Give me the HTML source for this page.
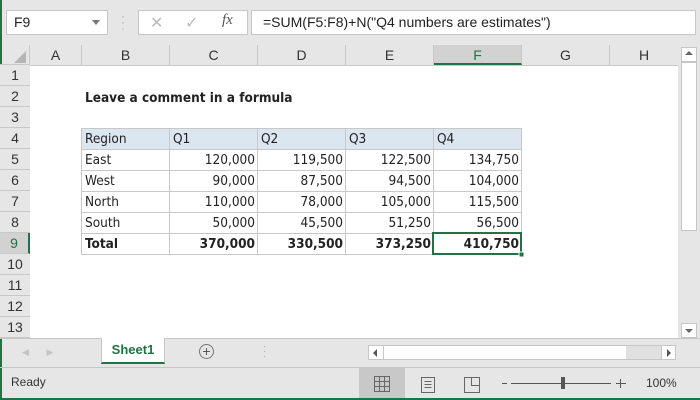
<!DOCTYPE html><html><head><style>
*{margin:0;padding:0;box-sizing:border-box}
body{width:700px;height:400px;overflow:hidden;background:#e6e6e6;font-family:"Liberation Sans",Calibri,sans-serif;position:relative;font-size:13px;color:#222}
.a{position:absolute}
.cell{position:absolute;line-height:20px;padding:0 3px;white-space:nowrap;font-family:"DejaVu Sans Condensed","Liberation Sans",sans-serif;font-size:13.5px}
.r{text-align:right}
.b{font-weight:bold}
.ch{position:absolute;top:45px;height:20px;border-right:1px solid #c8c8c8;text-align:center;line-height:20px;font-size:14px;color:#333}
.rh{position:absolute;left:0;width:30px;height:21px;border-bottom:1px solid #c8c8c8;text-align:center;line-height:21px;font-size:14px;color:#333;background:#e6e6e6}
</style></head><body>
<div class="a" style="left:0;top:0;width:2px;height:400px;background:#217346"></div>
<!-- formula bar -->
<div class="a" style="left:6px;top:10px;width:102px;height:25px;background:#fff;border:1px solid #c6c6c6;line-height:23px;padding-left:7px;font-size:14px">F9</div>
<div class="a" style="left:92px;top:20px;border:4px solid transparent;border-top:5px solid #777"></div>
<div class="a" style="left:121px;top:13px;color:#aaa;font-size:12px;line-height:6px">·<br>·<br>·</div>
<div class="a" style="left:138px;top:10px;width:110px;height:25px;background:#fff;border:1px solid #c6c6c6"></div>
<div class="a" style="left:150px;top:13px;color:#bbb;font-size:16px">✕</div>
<div class="a" style="left:185px;top:13px;color:#bbb;font-size:16px">✓</div>
<div class="a" style="left:222px;top:12px;color:#555;font-style:italic;font-family:'Liberation Serif',serif;font-size:15px">fx</div>
<div class="a" style="left:251px;top:10px;width:445px;height:25px;background:#fff;border:1px solid #c6c6c6;line-height:23px;padding-left:11px;font-size:14px">=SUM(F5:F8)+N("Q4 numbers are estimates")</div>
<!-- grid -->
<div class="a" style="left:30px;top:65px;width:648px;height:273px;background:#fff"></div>
<div class="a" style="left:0;top:45px;width:30px;height:20px;border-right:1px solid #c8c8c8;border-bottom:1px solid #c8c8c8"></div>
<div class="a" style="left:14px;top:51px;border-left:12px solid transparent;border-bottom:12px solid #b5b5b5;width:0;height:0"></div>
<div class="ch" style="left:30px;width:52px">A</div>
<div class="ch" style="left:82px;width:88px">B</div>
<div class="ch" style="left:170px;width:88px">C</div>
<div class="ch" style="left:258px;width:88px">D</div>
<div class="ch" style="left:346px;width:88px">E</div>
<div class="ch" style="left:434px;width:88px;background:#d2d2d2;color:#217346;border-bottom:2px solid #217346">F</div>
<div class="ch" style="left:522px;width:88px">G</div>
<div class="ch" style="left:610px;width:68px;border-right:none">H</div>
<div class="a" style="left:0;top:65px;width:678px;height:1px;background:#c8c8c8"></div>
<div class="a" style="left:29px;top:65px;width:1px;height:273px;background:#c8c8c8"></div>
<div class="rh" style="top:65px">1</div><div class="rh" style="top:86px">2</div><div class="rh" style="top:107px">3</div><div class="rh" style="top:128px">4</div><div class="rh" style="top:149px">5</div><div class="rh" style="top:170px">6</div><div class="rh" style="top:191px">7</div><div class="rh" style="top:212px">8</div><div class="rh" style="top:233px;background:#d2d2d2;color:#217346;border-right:2px solid #217346">9</div><div class="rh" style="top:254px">10</div><div class="rh" style="top:275px">11</div><div class="rh" style="top:296px">12</div><div class="rh" style="top:317px">13</div>
<div class="cell b" style="left:82px;top:88px">Leave a comment in a formula</div>
<!-- table -->
<div class="a" style="left:81px;top:128px;width:441px;height:21px;background:#dce6f1"></div>
<svg class="a" style="left:0;top:0" width="700" height="400">
<g stroke="#c8c8c8" stroke-width="1" fill="none">
<path d="M81.5 128.5H521.5M81.5 149.5H521.5M81.5 170.5H521.5M81.5 191.5H521.5M81.5 212.5H521.5M81.5 233.5H521.5M81.5 254.5H521.5"/>
<path d="M81.5 128V255M169.5 128V255M257.5 128V255M345.5 128V255M433.5 128V255M521.5 128V255"/>
</g>
<rect x="433" y="233" width="88" height="21" fill="none" stroke="#217346" stroke-width="2"/>
<rect x="519" y="252" width="5" height="5" fill="#217346" stroke="#fff" stroke-width="1"/>
</svg>
<div class="cell" style="left:82px;top:129px">Region</div><div class="cell" style="left:170px;top:129px">Q1</div><div class="cell" style="left:258px;top:129px">Q2</div><div class="cell" style="left:346px;top:129px">Q3</div><div class="cell" style="left:434px;top:129px">Q4</div>
<div class="cell" style="left:82px;top:150px">East</div><div class="cell r" style="left:170px;width:88px;top:150px">120,000</div><div class="cell r" style="left:258px;width:88px;top:150px">119,500</div><div class="cell r" style="left:346px;width:88px;top:150px">122,500</div><div class="cell r" style="left:434px;width:88px;top:150px">134,750</div>
<div class="cell" style="left:82px;top:171px">West</div><div class="cell r" style="left:170px;width:88px;top:171px">90,000</div><div class="cell r" style="left:258px;width:88px;top:171px">87,500</div><div class="cell r" style="left:346px;width:88px;top:171px">94,500</div><div class="cell r" style="left:434px;width:88px;top:171px">104,000</div>
<div class="cell" style="left:82px;top:192px">North</div><div class="cell r" style="left:170px;width:88px;top:192px">110,000</div><div class="cell r" style="left:258px;width:88px;top:192px">78,000</div><div class="cell r" style="left:346px;width:88px;top:192px">105,000</div><div class="cell r" style="left:434px;width:88px;top:192px">115,500</div>
<div class="cell" style="left:82px;top:213px">South</div><div class="cell r" style="left:170px;width:88px;top:213px">50,000</div><div class="cell r" style="left:258px;width:88px;top:213px">45,500</div><div class="cell r" style="left:346px;width:88px;top:213px">51,250</div><div class="cell r" style="left:434px;width:88px;top:213px">56,500</div>
<div class="cell b" style="left:82px;top:234px">Total</div><div class="cell r b" style="left:170px;width:88px;top:234px">370,000</div><div class="cell r b" style="left:258px;width:88px;top:234px">330,500</div><div class="cell r b" style="left:346px;width:88px;top:234px">373,250</div><div class="cell r b" style="left:434px;width:88px;top:234px">410,750</div>
<!-- vscroll -->
<div class="a" style="left:681px;top:47px;width:16px;height:291px;background:#e6e6e6"></div>
<div class="a" style="left:681px;top:47px;width:16px;height:15px;background:#fff;border:1px solid #c6c6c6"></div>
<div class="a" style="left:685px;top:51px;border:4px solid transparent;border-bottom:4px solid #666;border-top:none"></div>
<div class="a" style="left:681px;top:62px;width:16px;height:169px;background:#fff;border:1px solid #c6c6c6"></div>
<div class="a" style="left:681px;top:323px;width:16px;height:15px;background:#fff;border:1px solid #c6c6c6"></div>
<div class="a" style="left:685px;top:329px;border:4px solid transparent;border-top:4px solid #666;border-bottom:none"></div>
<!-- tabs -->
<div class="a" style="left:0;top:338px;width:700px;height:1px;background:#c6c6c6"></div>
<div class="a" style="left:22px;top:347px;color:#c4c4c4;font-size:9px">◀&nbsp;&nbsp;&nbsp;&nbsp;&nbsp;&nbsp;&nbsp;▶</div>
<div class="a" style="left:101px;top:338px;width:64px;height:26px;background:#fff;border:1px solid #c6c6c6;border-top:none;border-bottom:2px solid #217346;text-align:center;line-height:24px;color:#217346;font-weight:bold;font-size:13px">Sheet1</div>
<div class="a" style="left:199px;top:344px;width:15px;height:15px;border:1px solid #777;border-radius:50%;text-align:center;line-height:13px;color:#555;font-size:14px">+</div>
<div class="a" style="left:263px;top:344px;color:#aaa;font-size:10px;line-height:5px">·<br>·<br>·</div>
<div class="a" style="left:368px;top:345px;width:308px;height:15px;background:#fff;border:1px solid #c6c6c6"></div>
<div class="a" style="left:383px;top:345px;width:1px;height:15px;background:#c6c6c6"></div>
<div class="a" style="left:626px;top:346px;width:35px;height:13px;background:#e0e0e0"></div>
<div class="a" style="left:661px;top:345px;width:1px;height:15px;background:#c6c6c6"></div>
<div class="a" style="left:373px;top:349px;border:4px solid transparent;border-right:4px solid #555;border-left:none"></div>
<div class="a" style="left:667px;top:349px;border:4px solid transparent;border-left:4px solid #555;border-right:none"></div>
<!-- status -->
<div class="a" style="left:0;top:367px;width:700px;height:1px;background:#c6c6c6"></div>
<div class="a" style="left:0;top:398px;width:700px;height:2px;background:#217346"></div>
<div class="a" style="left:11px;top:375px;font-size:12px;color:#333">Ready</div>
<div class="a" style="left:359px;top:368px;width:46px;height:30px;background:#c8c8c8"></div>
<svg class="a" style="left:0;top:0" width="700" height="400" fill="none" stroke="#666" stroke-width="1">
<path d="M374.5 376.5h15v15h-15zM379.5 376.5v15M384.5 376.5v15M374.5 381.5h15M374.5 386.5h15"/>
<path d="M421.5 377.5h13v15h-13zM424.5 381.5h7M424.5 384.5h7M424.5 387.5h7"/>
<path d="M464.5 377.5h15v15h-15zM471.5 377.5v8h8"/>
<path d="M502 383.5h5M511 383.5h100M616 383.5h10M620.5 379v9" stroke="#555"/>
</svg>
<div class="a" style="left:561px;top:377px;width:4px;height:12px;background:#555"></div>
<div class="a" style="left:646px;top:376px;font-size:12px;color:#333">100%</div>
</body></html>
